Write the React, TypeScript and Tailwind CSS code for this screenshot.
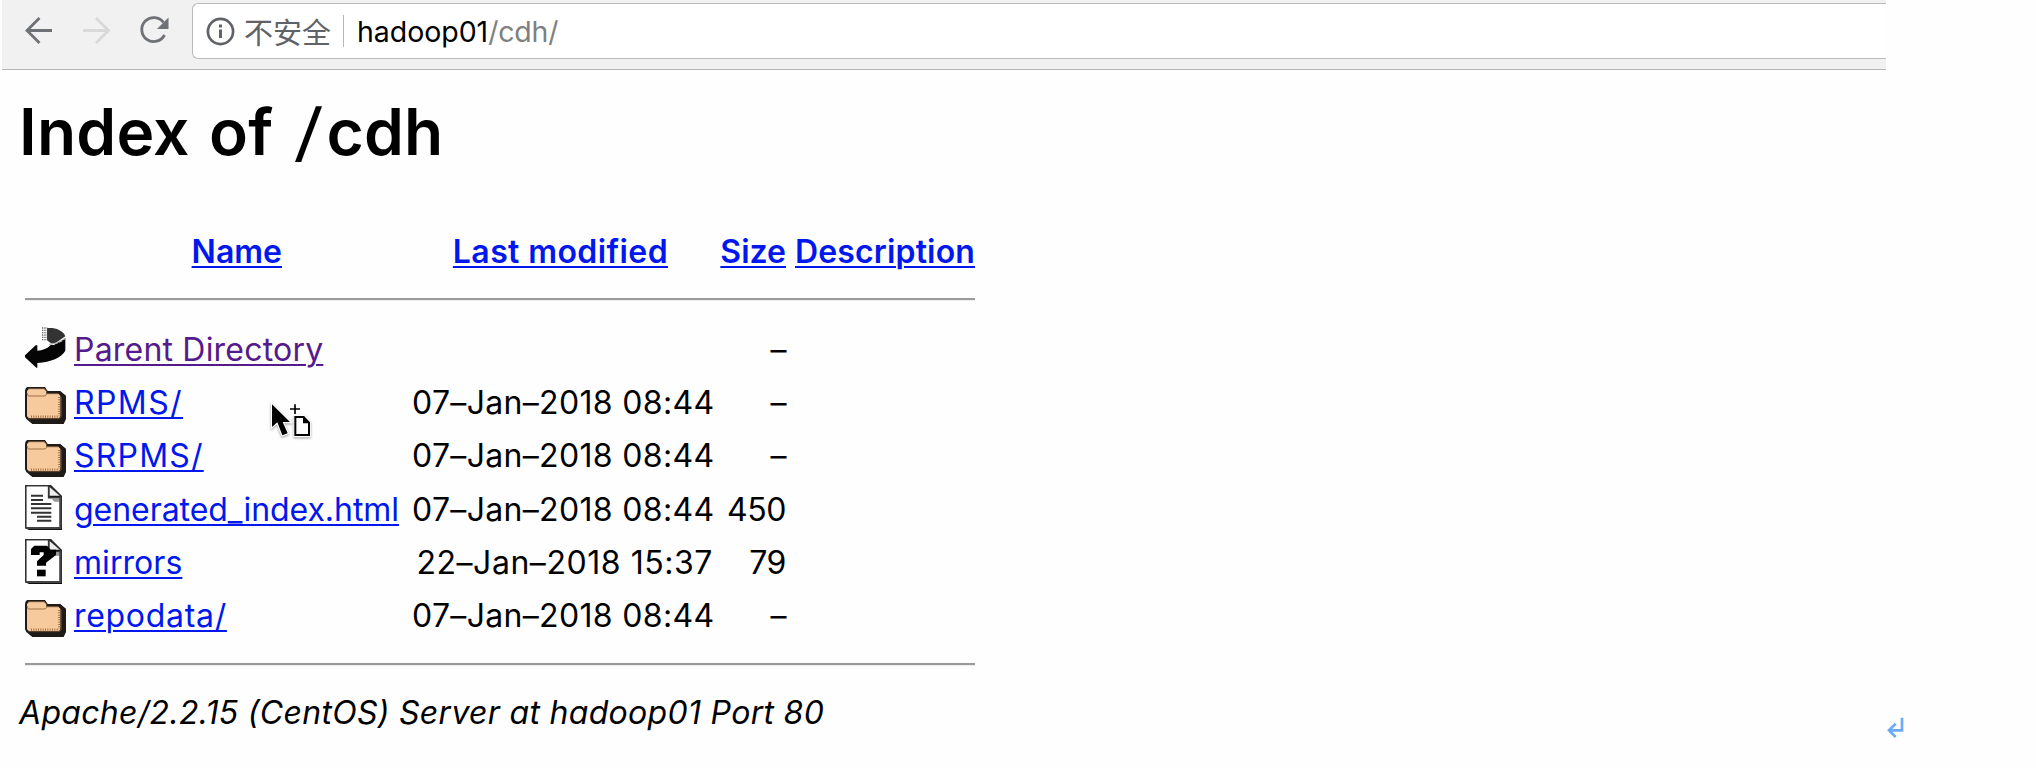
import type { ReactNode } from "react";

const link = "underline decoration-2 underline-offset-[3px]";

function FolderIcon() {
  return (
    <svg className="-mt-[3px]" width="41" height="45" viewBox="0 0 123 135">
      <path d="M6 24h54l8 12h38l17 14v70l-7 15H22L4 120l-4-8V38l1-8z" fill="#1d1a17" />
      <path d="M6 36l6-7h46l6 6v9h36l6 6v62l-4 6H12l-6-6z" fill="#f6ca9c" />
      <path d="M6 42l4 9h50l7-8" fill="none" stroke="#a06f45" strokeWidth="3" />
      <path d="M10 29h48l6 7" fill="none" stroke="#6b5039" strokeWidth="3" />
      <path d="M66 44h34" stroke="#77553a" strokeWidth="3" />
      <path d="M18 113h84" stroke="#a06f45" strokeWidth="7" strokeDasharray="3 4" />
      <path d="M103 54v58" stroke="#a06f45" strokeWidth="7" strokeDasharray="3 4" />
      <path d="M10 119h94l5-6V54" fill="none" stroke="#5e4129" strokeWidth="3" />
    </svg>
  );
}

function BackIcon() {
  return (
    <svg className="-mt-[3px]" width="41" height="45" viewBox="0 0 123 135">
      <path d="M66 9h16c20 3 34 12 39 25L92 54l-12 2-14-10z" fill="#333" />
      <path d="M51 9h16M51 16h16M51 23h16M51 30h16M51 37h16M51 44h16" stroke="#666" strokeWidth="4" strokeDasharray="4 3" />
      <path d="M121 40v37c-12 21-43 34-84 37v14h-3L0 97v-6l32-30h5v16c16-1 30-6 40-17h10l34-20z" fill="#050505" />
      <path d="M72 58c20-1 38-8 49-19" fill="none" stroke="#bbb" strokeWidth="4" strokeDasharray="12 3" />
    </svg>
  );
}

function SheetIcon({ children }: { children: ReactNode }) {
  return (
    <svg className="-mt-[3px]" width="41" height="45" viewBox="0 0 123 135">
      <path d="M0 0h78l33 33v102H12L0 130z" fill="#111" />
      <path d="M4 4h68v34h32v88H4z" fill="#fff" />
      <path d="M2 2h74l32 34v92H2z" fill="none" stroke="#333" strokeWidth="4" />
      <path d="M73 5v27h31z" fill="#eee" />
      <path d="M71 2v36h36" fill="none" stroke="#333" strokeWidth="5" />
      <path d="M80 41h24v9H88z" fill="#999" />
      <path d="M106 36v93H4" fill="none" stroke="#444" strokeWidth="6" />
      {children}
    </svg>
  );
}

function TextIcon() {
  return (
    <SheetIcon>
      <path d="M18 32h36M18 45h36M18 57h61M18 70h61M18 83h61M36 95h43M36 107h43" stroke="#333" strokeWidth="6" />
    </SheetIcon>
  );
}

function UnknownIcon() {
  return (
    <SheetIcon>
      <path d="M18 48V30l10-10h38l11 12h16v16L63 71v9H36V67l20-19v-8H44v8z" fill="#000" />
      <path d="M36 92h26v20H36z" fill="#000" />
    </SheetIcon>
  );
}

const rows = [
  { icon: <BackIcon />, name: "Parent Directory", tone: "text-[#551a8b] tracking-[0.2px]", date: "", size: "–", dateTone: "" },
  { icon: <FolderIcon />, name: "RPMS/", tone: "text-[#0018ee] tracking-[1.4px]", date: "07–Jan–2018 08:44", size: "–", dateTone: "tracking-[0.33px]" },
  { icon: <FolderIcon />, name: "SRPMS/", tone: "text-[#0018ee] tracking-[1.2px]", date: "07–Jan–2018 08:44", size: "–", dateTone: "tracking-[0.33px]" },
  { icon: <TextIcon />, name: "generated_index.html", tone: "text-[#0018ee] tracking-[-0.05px]", date: "07–Jan–2018 08:44", size: "450", dateTone: "tracking-[0.33px]" },
  { icon: <UnknownIcon />, name: "mirrors", tone: "text-[#0018ee] tracking-[0.05px]", date: "22–Jan–2018 15:37", size: "79", dateTone: "tracking-[0.55px]" },
  { icon: <FolderIcon />, name: "repodata/", tone: "text-[#0018ee] tracking-[0.7px]", date: "07–Jan–2018 08:44", size: "–", dateTone: "tracking-[0.33px]" },
];

function Toolbar() {
  return (
    <header className="ml-0.5 flex h-[70px] w-[1884px] border-b border-[#b4b4b4] bg-[#f1f1f1] pt-[3px]">
      <svg className="shrink-0" width="190" height="56" viewBox="2 3 190 56" fill="none" strokeWidth="2.8">
        <path d="M52 30.5H27.5M39.5 18L27 30.5L39.5 43" stroke="#6e7175" />
        <path d="M83 30.5H108.500M96 18L108.500 30.500L96 43" stroke="#d9d9d9" />
        <path d="M163.500 22.500A12 12 0 1 0 164.500 35" stroke="#6e7175" />
        <path d="M168.500 17.500V29H157z" fill="#6e7175" />
      </svg>
      <div className="flex h-14 flex-1 items-center rounded-l-md border border-r-0 border-[#bababa] bg-white pl-[13px]">
        <svg width="29" height="29" viewBox="0 0 29 29" fill="none">
          <circle cx="14.500" cy="14.500" r="12.600" stroke="#5f6368" strokeWidth="2.700" />
          <path d="M14.500 12.500V21M14.500 7.500V10.500" stroke="#5f6368" strokeWidth="3" />
        </svg>
        <span className="ml-[9px] font-['Noto_Sans_CJK_SC',sans-serif] text-[29px] leading-[54px] text-[#5f6266]">不安全</span>
        <span className="ml-3 h-8 w-px bg-[#b5b5b5]" />
        <span className="ml-[13px] mt-0.5 text-[28.5px] leading-[54px] tracking-[-0.05px] text-black">hadoop01</span>
        <span className="mt-0.5 text-[28.5px] leading-[54px] tracking-[-0.2px] text-[#808080]">/cdh/</span>
      </div>
    </header>
  );
}

function Cursor() {
  return (
    <svg className="absolute left-[260px] top-[395px]" width="60" height="50" viewBox="0 0 180 150">
      <g className="drop-shadow-[0_3px_3px_rgba(0,0,0,0.4)]">
        <path d="M36 28v68l16-14 15 39 16-6-15-34h22z" fill="#000" stroke="#fff" strokeWidth="7" paintOrder="stroke" />
        <path d="M105 64h27l16 17v41h-43z" fill="#fff" stroke="#fff" strokeWidth="9" />
      </g>
      <path d="M105 28v29M90 42h30" stroke="#000" strokeWidth="5" />
      <path d="M106 66h25l16 17v37h-41z" fill="#fff" stroke="#000" strokeWidth="6" />
      <path d="M129 65v20h20z" fill="#000" />
    </svg>
  );
}

export default function App() {
  return (
    <div className="relative h-[768px] w-[2036px] overflow-hidden bg-[#fefefe] font-['Inter','Noto_Sans_CJK_SC',sans-serif] text-[32px] text-black">
      <Toolbar />
      <main className="pl-[19px]">
        <h1 className="mt-[22px] whitespace-nowrap text-[64px] font-[560] leading-[80px] tracking-[0.2px] [word-spacing:3px]">
          Index of <span className="ml-1 mr-[6px] inline-block -skew-x-6 font-medium">/</span>cdh
        </h1>
        <div className="ml-1.5 mt-[53px] w-[950px]">
          <div className="grid h-[54px] grid-cols-[425px_224px_112px_189px] items-center text-right font-[560] leading-[54px] text-[#0018ee]">
            <span className="pr-[168px]"><a className={link}>Name</a></span>
            <span className="pr-1.5"><a className={`${link} tracking-[0.4px]`}>Last modified</a></span>
            <span><a className={link}>Size</a></span>
            <span><a className={`${link} tracking-[0.15px]`}>Description</a></span>
          </div>
          <hr className="mt-[19px] h-[3px] border-0 border-t-2 border-[#9a9a9a] bg-[#eee]" />
          <div className="mt-[21.500px]">
            {rows.map((row) => (
              <div key={row.name} className="grid h-[53.4px] grid-cols-[49px_338px_301px_73px] items-center whitespace-nowrap leading-[53.4px]">
                {row.icon}
                <span><a className={`${link} ${row.tone}`}>{row.name}</a></span>
                <span className={`text-right ${row.dateTone}`}>{row.date}</span>
                <span className="text-right tracking-[-0.4px]">{row.size}</span>
              </div>
            ))}
          </div>
          <hr className="mt-[20px] h-[3px] border-0 border-t-2 border-[#9a9a9a] bg-[#eee]" />
        </div>
        <footer className="mt-[23px] flex h-12 items-center">
          <address className="whitespace-nowrap italic leading-[48px] tracking-[0.3px]">
            Apache/2.2.15 (CentOS) Server at hadoop01 Port 80
          </address>
        </footer>
      </main>
      <Cursor />
      <svg className="absolute left-[1886px] top-[716px]" width="20" height="24" viewBox="78 81 60 72" fill="none" stroke="#6caaf6" strokeWidth="8">
        <path d="M126 86v38H88M107 104L87 124l20 20" />
      </svg>
    </div>
  );
}
